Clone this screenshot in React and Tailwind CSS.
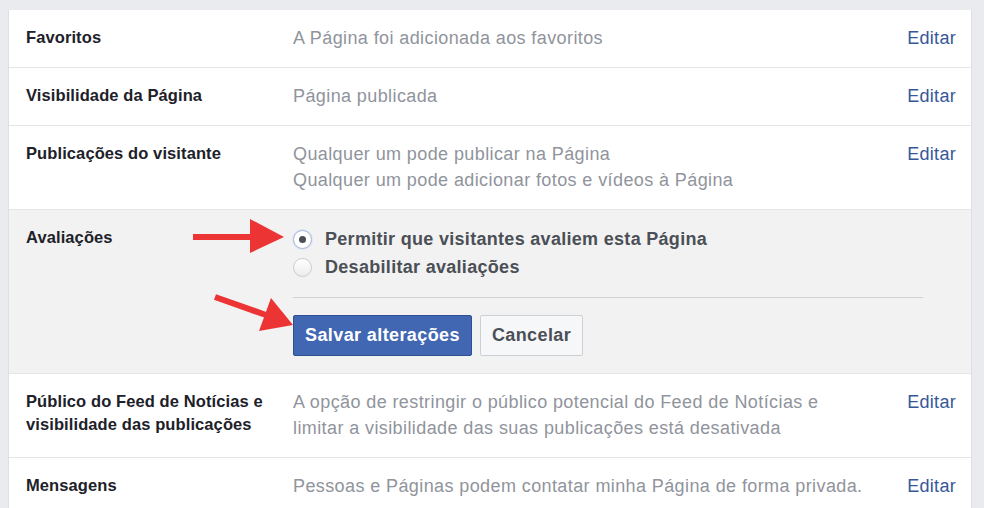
import React from "react";

const font = { fontFamily: '"Liberation Sans", Arial, sans-serif' };

function Row({ label, children, edit = true, last = false }) {
  return (
    <div
      className={`flex pl-[17px] pr-[15px] pt-[15px] pb-[16px] bg-white ${last ? "" : "border-b border-[#e5e5e5]"}`}
    >
      <div className="w-[267px] shrink-0 pt-[1px] text-[16.5px] leading-[23px] tracking-[0.1px] font-bold text-[#1d2129]">
        {label}
      </div>
      <div className="flex-1 text-[18px] leading-[26px] tracking-[0.4px] text-[#90949c]">{children}</div>
      {edit && (
        <div className="shrink-0 text-[18px] leading-[26px] tracking-[0.3px] text-[#365899]">Editar</div>
      )}
    </div>
  );
}

function Radio({ checked, children }) {
  return (
    <div className="flex items-center h-[28px]">
      <div
        className={`w-[19px] h-[19px] rounded-full border flex items-center justify-center ${
          checked
            ? "border-[#a8b6d8] bg-white shadow-[0_0_0_1px_#dfe5f3]"
            : "border-[#c9ccd1] bg-gradient-to-b from-white to-[#ececec]"
        }`}
      >
        {checked && <div className="w-[7px] h-[7px] rounded-full bg-[#4b4f56]" />}
      </div>
      <span className="ml-[13px] text-[18px] tracking-[0.3px] font-bold text-[#4b4f56]">{children}</span>
    </div>
  );
}

export default function App() {
  return (
    <div className="relative w-[984px] h-[508px] overflow-hidden bg-[#e9ebee]" style={font}>
      <div className="ml-[8px] mr-[12px] mt-[10px] bg-white border-x border-[#dddfe2]">
        <Row label="Favoritos">A Página foi adicionada aos favoritos</Row>
        <Row label="Visibilidade da Página">Página publicada</Row>
        <Row label="Publicações do visitante">
          Qualquer um pode publicar na Página
          <br />
          Qualquer um pode adicionar fotos e vídeos à Página
        </Row>
        <div className="flex pl-[17px] pr-[15px] pt-[15px] pb-[17px] border-b border-[#e5e5e5] bg-[#f2f2f2]">
          <div className="w-[267px] shrink-0 pt-[1px] text-[16.5px] leading-[23px] tracking-[0.1px] font-bold text-[#1d2129]">
            Avaliações
          </div>
          <div className="flex-1">
            <Radio checked>Permitir que visitantes avaliem esta Página</Radio>
            <Radio>Desabilitar avaliações</Radio>
            <div className="mt-[16px] mr-[33px] border-t border-[#cfd1d5]" />
            <div className="mt-[17px] flex gap-[8px]">
              <button className="h-[41px] px-[11px] rounded-[2px] bg-[#4267b2] border border-[#2f4f93] text-white font-bold text-[18px] tracking-[0.4px]">
                Salvar alterações
              </button>
              <button className="h-[41px] px-[11px] rounded-[2px] bg-[#f6f7f9] border border-[#ced0d4] text-[#4b4f56] font-bold text-[18px] tracking-[0.4px]">
                Cancelar
              </button>
            </div>
          </div>
        </div>
        <Row label={<>Público do Feed de Notícias e<br />visibilidade das publicações</>}>
          A opção de restringir o público potencial do Feed de Notícias e
          <br />
          limitar a visibilidade das suas publicações está desativada
        </Row>
        <Row label="Mensagens" last>
          Pessoas e Páginas podem contatar minha Página de forma privada.
        </Row>
      </div>
      <svg
        className="absolute left-0 top-0 pointer-events-none"
        width="984"
        height="508"
        viewBox="0 0 984 508"
      >
        <polygon points="193,234 250,234 250,219 284,237 250,253 250,240 193,240" fill="#ec3434" />
        <line x1="215" y1="297" x2="266" y2="315" stroke="#ec3434" strokeWidth="6" />
        <polygon points="271,298 293,325 259,331" fill="#ec3434" />
      </svg>
    </div>
  );
}
